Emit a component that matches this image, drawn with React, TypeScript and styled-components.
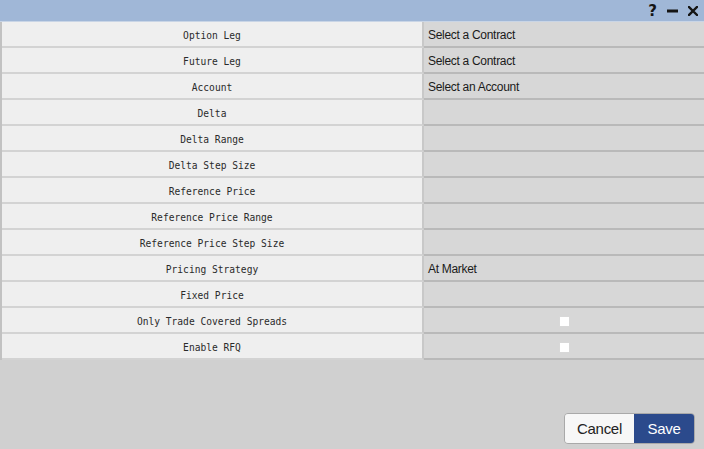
import React from "react";
import styled, { createGlobalStyle } from "styled-components";

const Global = createGlobalStyle`
  html, body { margin: 0; padding: 0; width: 704px; height: 449px; overflow: hidden; }
  body { font-family: "Liberation Sans", Arial, sans-serif; }
`;

const Window = styled.div`
  width: 704px;
  height: 449px;
  display: flex;
  flex-direction: column;
  background: #d0d0d0;
`;

const TitleBar = styled.div`
  height: 21px;
  background: #a0b7d7;
  border-bottom: 1px solid #c9d5e6;
  display: flex;
  align-items: center;
  justify-content: flex-end;
  padding-right: 6px;
  gap: 9px;
  color: #141414;
  font-family: "DejaVu Sans", sans-serif;
  font-weight: bold;
  font-size: 15px;
`;

const TitleIcon = styled.span`
  display: inline-flex;
  align-items: center;
  justify-content: center;
  width: 11px;
  height: 14px;
`;

const Table = styled.div`
  display: grid;
  grid-template-columns: 422px 1fr;
  border-left: 2px solid #c2c2c2;
`;

const LabelCell = styled.div`
  height: 22px;
  padding-top: 2px;
  background: #efefef;
  border-bottom: 2px solid #d3d3d3;
  border-right: 2px solid #c8c8c8;
  display: flex;
  align-items: center;
  justify-content: center;
  font-family: "DejaVu Sans Mono", monospace;
  font-size: 9.6px;
  color: #2a2a2a;
  white-space: pre;
`;

const ValueCell = styled.div<{ $center?: boolean }>`
  height: 22px;
  padding-top: 2px;
  background: #d7d7d7;
  border-bottom: 2px solid #b9b9b9;
  display: flex;
  align-items: center;
  justify-content: ${(p) => (p.$center ? "center" : "flex-start")};
  padding-left: ${(p) => (p.$center ? "0" : "4px")};
  font-size: 12px;
  letter-spacing: -0.3px;
  color: #1a1a1a;
`;

const Check = styled.span`
  width: 11px;
  height: 11px;
  background: #ffffff;
  border: 1px solid #d8d8d8;
  box-sizing: border-box;
  display: block;
`;

const Footer = styled.div`
  flex: 1;
  display: flex;
  align-items: flex-end;
  justify-content: flex-end;
  padding: 0 9px 5px 0;
`;

const ButtonGroup = styled.div`
  display: flex;
  border-radius: 4px;
  border: 1px solid #a9a9a9;
  overflow: hidden;
`;

const Button = styled.button<{ $primary?: boolean }>`
  height: 29px;
  padding: 0;
  width: ${(p) => (p.$primary ? "60px" : "69px")};
  border: none;
  background: ${(p) => (p.$primary ? "#2b4a8c" : "#f7f7f7")};
  color: ${(p) => (p.$primary ? "#ffffff" : "#222222")};
  font-family: "Liberation Sans", Arial, sans-serif;
  font-size: 15px;
  letter-spacing: -0.3px;
  cursor: pointer;
`;

type Row = { label: string; value?: string; check?: boolean };

const rows: Row[] = [
  { label: "Option Leg", value: "Select a Contract" },
  { label: "Future Leg", value: "Select a Contract" },
  { label: "Account", value: "Select an Account" },
  { label: "Delta" },
  { label: "Delta Range" },
  { label: "Delta Step Size" },
  { label: "Reference Price" },
  { label: "Reference Price Range" },
  { label: "Reference Price Step Size" },
  { label: "Pricing Strategy", value: "At Market" },
  { label: "Fixed Price" },
  { label: "Only Trade Covered Spreads", check: true },
  { label: "Enable RFQ", check: true },
];

export default function App() {
  return (
    <>
      <Global />
      <Window>
        <TitleBar>
          <TitleIcon>?</TitleIcon>
          <TitleIcon>
            <svg width="11" height="4" viewBox="0 0 11 4">
              <rect x="0" y="0.5" width="11" height="3" fill="#141414" />
            </svg>
          </TitleIcon>
          <TitleIcon>
            <svg width="10" height="10" viewBox="0 0 10 10">
              <path d="M1 1 L9 9 M9 1 L1 9" stroke="#141414" strokeWidth="2.4" strokeLinecap="square" />
            </svg>
          </TitleIcon>
        </TitleBar>
        <Table>
          {rows.map((r) => (
            <React.Fragment key={r.label}>
              <LabelCell>{r.label}</LabelCell>
              <ValueCell $center={r.check}>
                {r.check ? <Check /> : r.value}
              </ValueCell>
            </React.Fragment>
          ))}
        </Table>
        <Footer>
          <ButtonGroup>
            <Button>Cancel</Button>
            <Button $primary>Save</Button>
          </ButtonGroup>
        </Footer>
      </Window>
    </>
  );
}
